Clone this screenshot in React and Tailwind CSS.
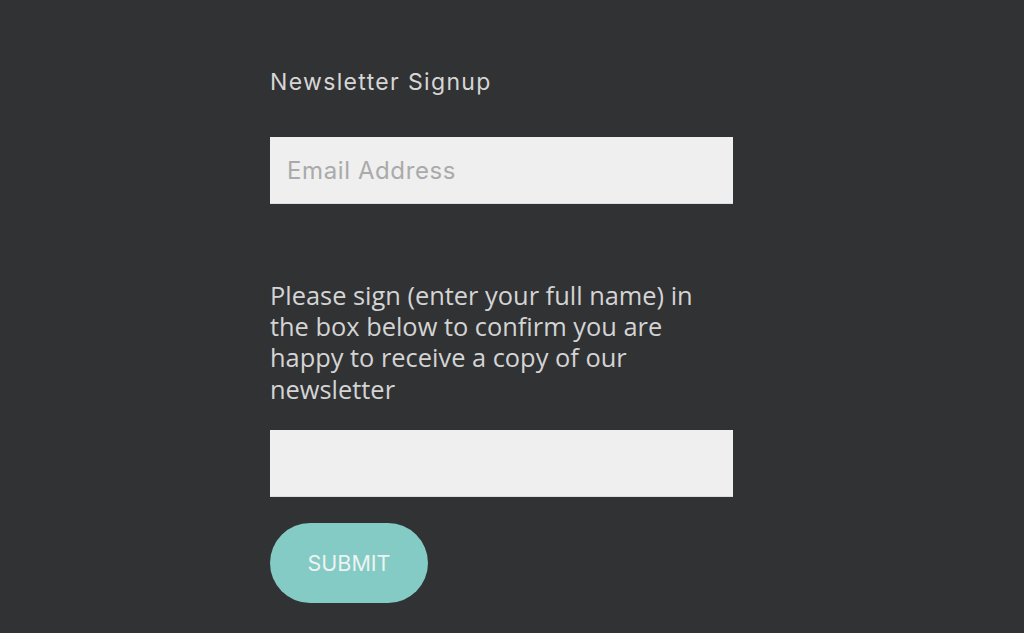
export default function App() {
  return (
    <div className="min-h-[633px] w-full bg-[#313234] font-['Open_Sans',sans-serif]">
      <div className="ml-[270px] w-[463px] pt-[67px]">
        <h2 className="text-[23px] leading-[30px] text-[#d6d6d6] font-['Inter',sans-serif] tracking-[1.35px]">
          Newsletter Signup
        </h2>
        <input
          type="email"
          placeholder="Email Address"
          className="mt-[40px] block h-[67px] w-full bg-[#efefef] px-[17px] text-[24px] tracking-[0.6px] text-[#555] placeholder:text-[#aaa] font-['Inter',sans-serif] border-b border-[#ddd] outline-none"
        />
        <p className="mt-[76px] max-w-[450px] text-[25.4px] leading-[31.2px] text-[#d4d4d4]">
          Please sign (enter your full name) in the box below to confirm you are happy to receive a copy of our newsletter
        </p>
        <input
          type="text"
          className="mt-[25px] block h-[67px] w-full bg-[#efefef] px-[17px] text-[22px] border-b border-[#ddd] outline-none"
        />
        <button className="mt-[26px] h-[80px] w-[158px] rounded-full bg-[#83cbc4] text-[21.5px] text-[#eef3f2] font-['Inter',sans-serif] uppercase">
          Submit
        </button>
      </div>
    </div>
  );
}
